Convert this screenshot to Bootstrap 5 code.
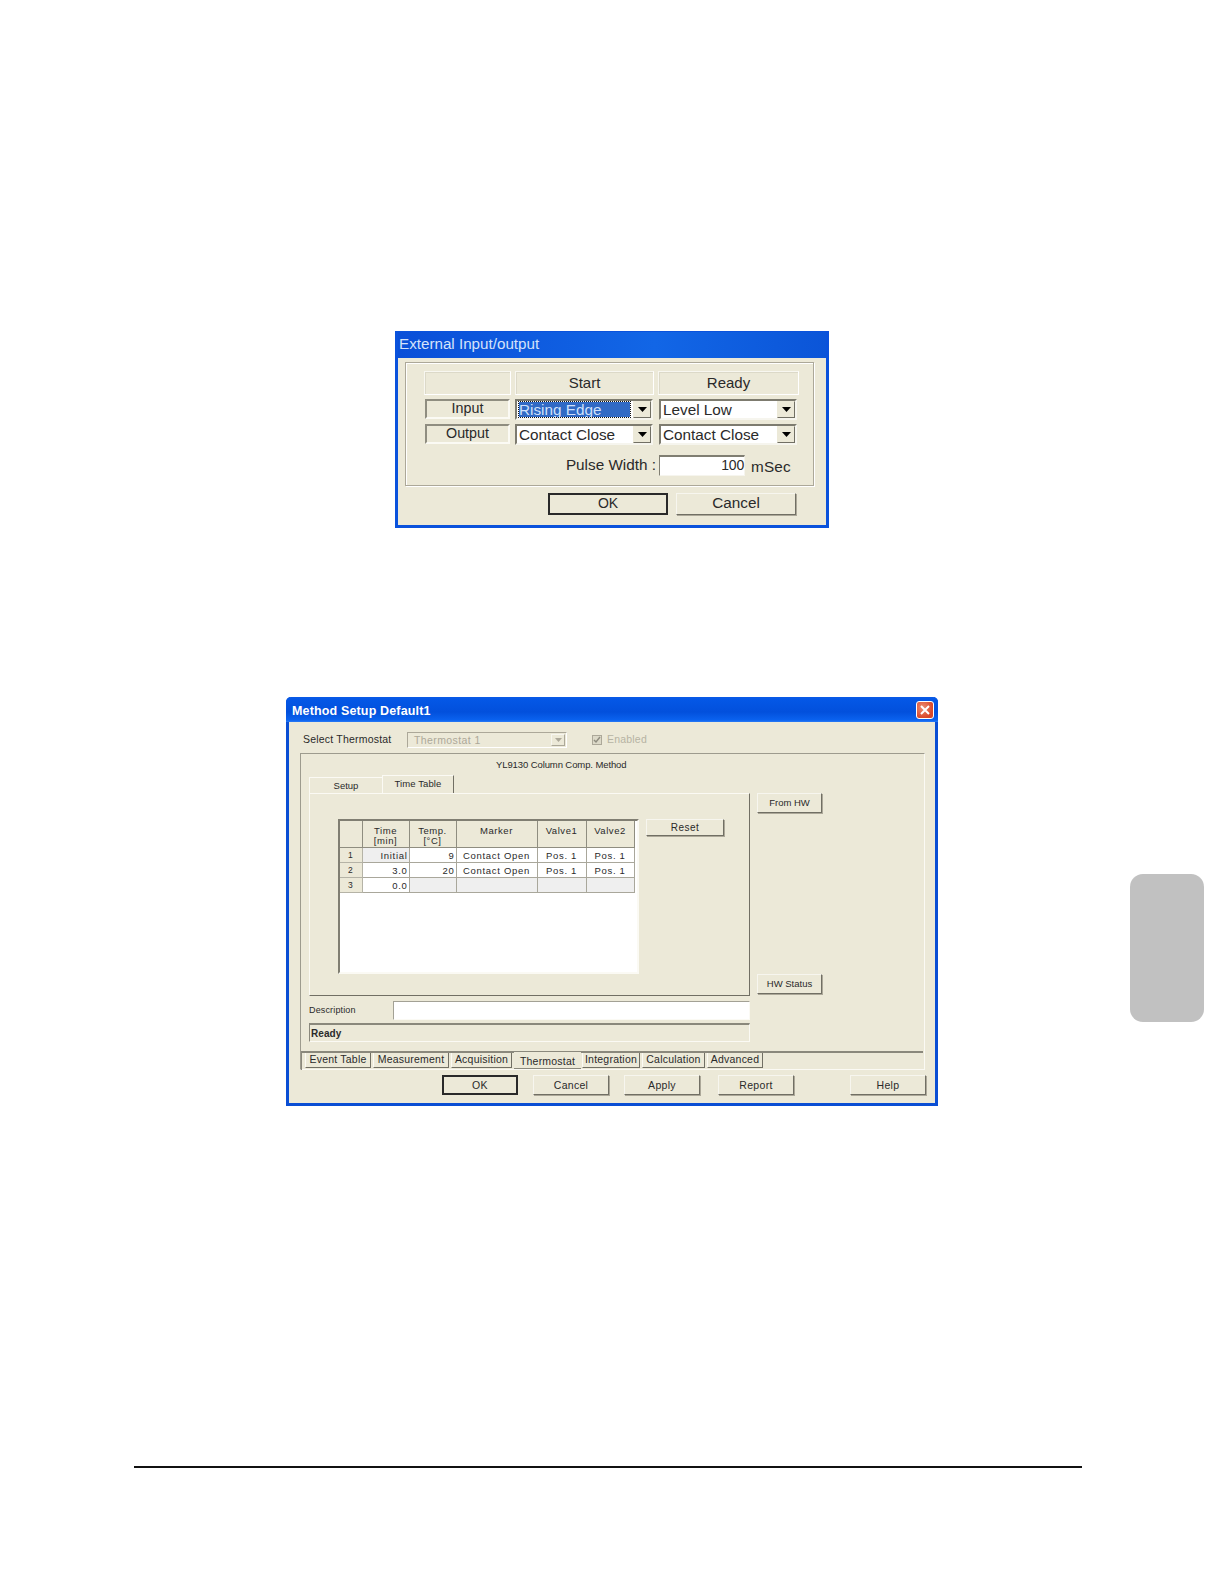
<!DOCTYPE html>
<html lang="en">
<head>
<meta charset="utf-8">
<title>Method Setup</title>
<link href="https://cdn.jsdelivr.net/npm/bootstrap@5.3.0/dist/css/bootstrap.min.css" rel="stylesheet">
<style>
body{background:#fff;margin:0;font-family:"Liberation Sans",Arial,sans-serif;color:#2a2a2a}
.sheet{position:relative;width:1224px;height:1584px;padding-top:331px;overflow:hidden}
.thumb{position:absolute;left:1130px;top:874px;width:74px;height:148px;border-radius:13px;background:#c1c1c1}
.rule{width:948px;height:2px;margin:360px 0 0 134px;background:#111}
.win{background:#ece9d8}
.win-a{width:434px;height:197px;margin-left:395px;border:3px solid #0a52dc;border-top-width:1px;font-size:15.3px}
.title-a{height:26px;background:linear-gradient(90deg,#0a4fd8,#1266e6 60%,#0b55d8);color:#d4e2fa;padding-left:1px;line-height:24px;font-size:15.2px}
.group{margin:4px 0 0 7px;width:409px;height:124px;border:1px solid #aca899;box-shadow:1px 1px 0 #fff,inset 1px 1px 0 #fff;display:grid;grid-template-columns:87px 139px 141px;grid-template-rows:24px 21px 21px 21px;column-gap:4px;row-gap:4px;padding:8px 0 0 18px}
.cap{background:#ece9d8;border:1px solid #f8f7f0;border-right-color:#fff;border-bottom-color:#fff;box-shadow:inset 1px 1px 0 #dcd9c8;text-align:center;line-height:22px;font-size:15px}
.tag{border:2px solid #8f8d80;border-right-color:#fbfaf4;border-bottom-color:#fbfaf4;text-align:center;line-height:15px;height:20px;width:85px;margin-left:1px;font-size:14.3px}
.combo{display:flex;border:2px solid #7d7b6f;border-right-color:#f6f5ee;border-bottom-color:#f6f5ee;background:#fff;align-items:stretch;margin-right:1px}
.combo-r{margin:0 2px 0 1px}
.combo-text{flex:1 1 auto;padding-left:2px;line-height:17px;white-space:nowrap;overflow:hidden}
.sel{background:#316ac5;color:#cfe0fb;outline:1px dotted #111;outline-offset:0;margin:1px 3px 1px 0;padding-left:0;height:15px;line-height:15px}
.drop{flex:0 0 18px;background:#ece9d8;border:1px solid #ece9d8;border-right-color:#716f64;border-bottom-color:#716f64;display:flex;align-items:center;justify-content:center}
.drop svg{display:block}
.pulse-lab{grid-column:1/3;text-align:right;padding-right:0;margin:7px -2px 0 0;line-height:18px}
.pulse{display:flex;align-items:flex-start;margin:6px 0 0 1px}
.pulse-in{width:86px;height:21px;border:1px solid #807e72;border-right-color:#f6f5ee;border-bottom-color:#f6f5ee;border-top-width:2px;background:#fff;text-align:right;line-height:17px;padding-right:0;font-size:14px;letter-spacing:-.2px}
.pulse-u{margin-left:6px;line-height:23px;letter-spacing:.2px}
.foot-a{display:flex;gap:8px;margin:7px 0 0 150px}
.xbtn{border-radius:0;padding:0;background:#ece9d8;color:#2a2a2a;border:1px solid #f7f6ef;border-right-color:#716f64;border-bottom-color:#716f64;box-shadow:1px 1px 0 #aca899;line-height:1}
.xbtn:hover{background:#ece9d8;color:#2a2a2a}
.foot-a .xbtn{width:120px;height:22px;font-size:15.3px;padding-bottom:2px}
.foot-a .xbtn.def{font-size:14px}
.foot-a .xbtn.def,.foot-b .xbtn.def{border:2px solid #2a2a2a;box-shadow:none}

.win-b{width:652px;height:409px;margin:169px 0 0 286px;border:3px solid #0a4ed4;border-top:0;border-radius:5px 5px 0 0;font-size:10.5px;letter-spacing:.2px}
.title-b{height:25px;margin:0 -3px;border-radius:5px 5px 0 0;background:linear-gradient(180deg,#0a5ae6 0,#0457e6 10%,#0250dc 60%,#0a62ef 92%,#2a7af5 100%);color:#fff;font-weight:700;font-size:12.5px;letter-spacing:.15px;display:flex;align-items:center;padding:0 4px 0 6px;justify-content:space-between}
.title-b>span:first-child{margin-top:3px}
.close-x{width:18px;height:18px;margin-top:1px;border:1px solid #fff;border-radius:3px;background:radial-gradient(circle at 35% 35%,#ec8d72,#d9482a 70%);display:flex;align-items:center;justify-content:center}
.picker{display:flex;align-items:center;height:16px;margin:10px 0 0 14px;font-size:10.5px}
.picker-lab{width:104px;margin-top:-1px}
.combo-off{width:160px;height:16px;border:1px solid #aca899;border-right-color:#fff;border-bottom-color:#fff;display:flex;color:#aca899;font-size:10.5px;line-height:14px;padding-left:6px;letter-spacing:.4px}
.combo-off span{flex:1 1 auto}
.combo-off i{flex:0 0 14px;margin:1px;background:#ece9d8;border:1px solid #f7f6ef;border-right-color:#aca899;border-bottom-color:#aca899;display:flex;align-items:center;justify-content:center}
.chk{width:10px;height:10px;margin:-1px 0 0 25px;border:1px solid #aca899;background:#dcd9c8;display:flex;align-items:center;justify-content:center}
.chk-lab{margin:-1px 0 0 5px;color:#b6b3a3}
.outer{width:625px;height:317px;margin:5px 0 0 11px;border:1px solid #9d9b8e;border-right-color:#fbfaf4;border-bottom-color:#fbfaf4}
.heading{height:21px;padding:4px 0 0 195px;font-size:9.5px;letter-spacing:-.1px;line-height:13px}
.cols{display:flex;height:267px}
.left{width:441px;margin-left:8px}
.right{width:65px;margin-left:7px;padding-top:18px;display:flex;flex-direction:column;gap:161px}
.right .xbtn{width:65px;height:20px;font-size:9.5px}
.tabs-top{display:flex;height:18px;align-items:flex-end;flex-wrap:nowrap}
.t{font-size:9.5px;text-align:center;width:73px;height:16px;line-height:15px;background:#ece9d8;border-top:1px solid #fbfaf4;border-left:1px solid #fbfaf4;letter-spacing:0}
.t-on{width:72px;height:18px;line-height:15px;border-right:1px solid #716f64;letter-spacing:.1px}
.tab-body{height:203px;border:1px solid #fbfaf4;border-right:1px solid #716f64;border-bottom:1px solid #716f64;display:flex;padding:25px 0 0 28px;align-items:flex-start}
.gridbox{width:301px;height:155px;border:2px solid #807e72;border-right-color:#fbfaf4;border-bottom-color:#fbfaf4;background:#fff;overflow:hidden;margin-right:7px}
.xp-grid.table{width:294px;table-layout:fixed;margin:0;--bs-table-bg:transparent;--bs-table-border-color:#a9a79b;border-collapse:collapse;font-size:9.5px;letter-spacing:.7px;color:#2a2a2a}
.xp-grid.table>:not(caption)>*>*{padding:1px 1px 0;border:1px solid #a9a79b;border-width:0 1px 1px 0;background:transparent;box-shadow:none;color:#2a2a2a;line-height:13px;height:14.7px;vertical-align:middle}
.xp-grid.table>thead>tr>th{background:#ece9d8;font-weight:400;text-align:center;height:26px;line-height:10px;vertical-align:top;padding-top:5px;border-color:#8f8d80;letter-spacing:.55px}
.xp-grid.table>tbody>tr>th{background:#ece9d8;font-weight:400;text-align:center;border-color:#b5b3a6;font-size:8.5px}
.xp-grid.table>tbody>tr>td.gr{background:#efefef}
.c-h{width:22px}.c-t{width:47px}.c-m{width:81px}.c-a{width:49px}.c-b{width:48px}
.ar{text-align:right}.ac{text-align:center}
.reset-btn{width:78px;height:17px;font-size:10px;letter-spacing:.5px}
.desc{display:flex;height:19px;margin-top:5px;align-items:center}
.desc-lab{width:84px;font-size:9px;letter-spacing:.15px;margin-top:1px}
.desc-in{width:357px;height:19px;background:#fff;border:1px solid #a3a195;border-right-color:#fbfaf4;border-bottom-color:#fbfaf4}
.status{height:19px;margin-top:3px;border:1px solid #8a887c;border-right-color:#fbfaf4;border-bottom-color:#fbfaf4;border-top-width:2px;font-weight:700;font-size:10px;line-height:17px;padding-left:1px;letter-spacing:.05px}
.strip{margin-top:9px;border-top:2px solid #8a887c;display:flex;gap:2px;padding-left:3px;height:19px;width:622px;align-items:flex-start;border-left:1px solid #8a887c}
.bt{height:15px;font-size:10.5px;line-height:13px;text-align:center;border-left:1px solid #fbfaf4;border-right:1px solid #716f64;border-bottom:1px solid #716f64;white-space:nowrap;letter-spacing:.22px}
.w1{width:66px}.w2{width:76px}.w3{width:61px}.w4{width:67px}.w5{width:58px;margin-left:-1px}.w6{width:63px}.w7{width:56px}
.bt-on{height:17px;line-height:17px;border-right:0;border-bottom:1px solid #8a887c;border-left:0;background:#ece9d8;margin-top:-1px;padding-top:1px;letter-spacing:.2px}
.foot-b{display:flex;gap:15px;margin:5px 0 0 153px}
.foot-b .xbtn{width:76px;height:20px;font-size:10.5px;letter-spacing:.3px}
.push-a{margin-left:3px}.push-b{margin-left:41px}
</style>
</head>
<body>
<main class="sheet">
  <section class="win win-a">
    <div class="title-a">External Input/output</div>
    <div class="group">
      <div class="cap"></div><div class="cap">Start</div><div class="cap">Ready</div>
      <div class="tag">Input</div>
      <div class="combo"><div class="combo-text"><div class="sel">Rising Edge</div></div><div class="drop"><svg width="9" height="5" viewBox="0 0 9 5"><path d="M0 0h9L4.500 5z" fill="#000"/></svg></div></div>
      <div class="combo combo-r"><div class="combo-text">Level Low</div><div class="drop"><svg width="9" height="5" viewBox="0 0 9 5"><path d="M0 0h9L4.500 5z" fill="#000"/></svg></div></div>
      <div class="tag">Output</div>
      <div class="combo"><div class="combo-text">Contact Close</div><div class="drop"><svg width="9" height="5" viewBox="0 0 9 5"><path d="M0 0h9L4.500 5z" fill="#000"/></svg></div></div>
      <div class="combo combo-r"><div class="combo-text">Contact Close</div><div class="drop"><svg width="9" height="5" viewBox="0 0 9 5"><path d="M0 0h9L4.500 5z" fill="#000"/></svg></div></div>
      <div class="pulse-lab">Pulse Width :</div>
      <div class="pulse"><div class="pulse-in">100</div><div class="pulse-u">mSec</div></div>
    </div>
    <div class="foot-a">
      <button type="button" class="btn xbtn def">OK</button>
      <button type="button" class="btn xbtn">Cancel</button>
    </div>
  </section>

  <section class="win win-b">
    <div class="title-b">
      <span>Method Setup Default1</span>
      <span class="close-x"><svg width="10" height="10" viewBox="0 0 10 10"><path d="M1 1l8 8M9 1L1 9" stroke="#fff" stroke-width="2"/></svg></span>
    </div>
    <div class="picker">
      <div class="picker-lab">Select Thermostat</div>
      <div class="combo-off"><span>Thermostat 1</span><i><svg width="7" height="4" viewBox="0 0 7 4"><path d="M0 0h7L3.500 4z" fill="#aca899"/></svg></i></div>
      <div class="chk"><svg width="8" height="8" viewBox="0 0 8 8"><path d="M1 4l2 2 4-5" fill="none" stroke="#8f8d80" stroke-width="1.500"/></svg></div>
      <div class="chk-lab">Enabled</div>
    </div>
    <div class="outer">
      <div class="heading">YL9130 Column Comp. Method</div>
      <div class="cols">
        <div class="left">
          <div class="tabs-top">
            <div class="t">Setup</div>
            <div class="t t-on">Time Table</div>
          </div>
          <div class="tab-body">
            <div class="gridbox">
              <table class="table xp-grid">
                <colgroup><col class="c-h"><col class="c-t"><col class="c-t"><col class="c-m"><col class="c-a"><col class="c-b"></colgroup>
                <thead>
                  <tr><th></th><th>Time<br>[min]</th><th>Temp.<br>[°C]</th><th>Marker</th><th>Valve1</th><th>Valve2</th></tr>
                </thead>
                <tbody>
                  <tr><th>1</th><td class="ar gr">Initial</td><td class="ar">9</td><td class="ac">Contact Open</td><td class="ac">Pos. 1</td><td class="ac">Pos. 1</td></tr>
                  <tr><th>2</th><td class="ar">3.0</td><td class="ar">20</td><td class="ac">Contact Open</td><td class="ac">Pos. 1</td><td class="ac">Pos. 1</td></tr>
                  <tr><th>3</th><td class="ar">0.0</td><td class="gr"></td><td class="gr"></td><td class="gr"></td><td class="gr"></td></tr>
                </tbody>
              </table>
            </div>
            <button type="button" class="btn xbtn reset-btn">Reset</button>
          </div>
          <div class="desc"><div class="desc-lab">Description</div><div class="desc-in"></div></div>
          <div class="status">Ready</div>
        </div>
        <div class="right">
          <button type="button" class="btn xbtn">From HW</button>
          <button type="button" class="btn xbtn">HW Status</button>
        </div>
      </div>
      <div class="strip">
        <div class="bt w1">Event Table</div>
        <div class="bt w2">Measurement</div>
        <div class="bt w3">Acquisition</div>
        <div class="bt bt-on w4">Thermostat</div>
        <div class="bt w5">Integration</div>
        <div class="bt w6">Calculation</div>
        <div class="bt w7">Advanced</div>
      </div>
    </div>
    <div class="foot-b">
      <button type="button" class="btn xbtn def">OK</button>
      <button type="button" class="btn xbtn">Cancel</button>
      <button type="button" class="btn xbtn">Apply</button>
      <button type="button" class="btn xbtn push-a">Report</button>
      <button type="button" class="btn xbtn push-b">Help</button>
    </div>
  </section>

  <div class="rule"></div>
  <div class="thumb"></div>
</main>
<script src="https://cdn.jsdelivr.net/npm/bootstrap@5.3.0/dist/js/bootstrap.bundle.min.js"></script>
</body>
</html>
